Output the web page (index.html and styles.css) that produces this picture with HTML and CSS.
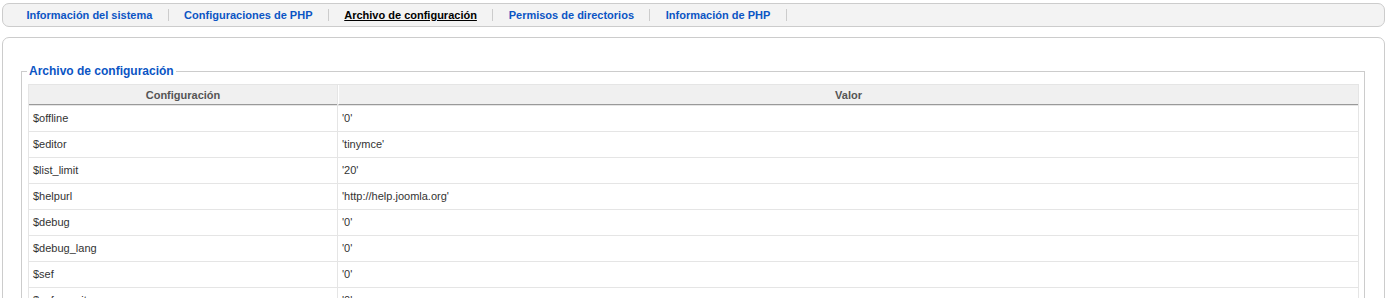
FILE: index.html
```html
<!DOCTYPE html>
<html lang="es">
<head>
<meta charset="UTF-8" />
<title>Información del sistema</title>
<link rel="stylesheet" href="styles.css">
</head>
<body>

<ul class="submenu">
  <li><a href="#">Información del sistema</a></li>
  <li><a href="#">Configuraciones de PHP</a></li>
  <li><a href="#" class="active">Archivo de configuración</a></li>
  <li><a href="#">Permisos de directorios</a></li>
  <li><a href="#">Información de PHP</a></li>
</ul>

<div class="panel">
  <fieldset class="adminform">
    <legend>Archivo de configuración</legend>
    <table class="adminlist">
      <thead>
        <tr>
          <th class="col-name">Configuración</th>
          <th>Valor</th>
        </tr>
      </thead>
      <tbody>
        <tr><td>$offline</td><td>'0'</td></tr>
        <tr><td>$editor</td><td>'tinymce'</td></tr>
        <tr><td>$list_limit</td><td>'20'</td></tr>
        <tr><td>$helpurl</td><td>'http://help.joomla.org'</td></tr>
        <tr><td>$debug</td><td>'0'</td></tr>
        <tr><td>$debug_lang</td><td>'0'</td></tr>
        <tr><td>$sef</td><td>'0'</td></tr>
        <tr><td>$sef_rewrite</td><td>'0'</td></tr>
        <tr><td>$sef_suffix</td><td>'0'</td></tr>
        <tr><td>$feed_limit</td><td>'10'</td></tr>
      </tbody>
    </table>
  </fieldset>
</div>

</body>
</html>
```

FILE: styles.css
```css
/* Base */
body {
  margin: 0;
  background: #fff;
  font-family: 'Liberation Sans', Arial, Helvetica, sans-serif;
  font-size: 11px;
  color: #333;
}

a {
  color: #0b55c4;
  text-decoration: none;
}

/* Tab bar at the top */
.submenu {
  list-style: none;
  margin: 3px 2px 0 2px;
  padding: 0 0 0 8px;
  height: 22px;
  border: 1px solid #ccc;
  border-radius: 7px;
  background: #f3f3f3;
  display: flex;
  align-items: center;
}

.submenu li {
  padding: 0 15.4px;
  border-right: 1px solid #ccc;
  line-height: 12px;
}

.submenu a {
  font-weight: bold;
  font-size: 11px;
}

.submenu a.active {
  color: #000;
  text-decoration: underline;
}

/* White panel holding the fieldset */
.panel {
  margin: 10px 2px 0 2px;
  border: 1px solid #ccc;
  border-radius: 7px;
  background: #fff;
  padding: 26px 19px 20px 18px;
}

fieldset.adminform {
  margin: 0;
  padding: 5px 5px 10px 6px;
  border: 1px solid #ccc;
}

fieldset.adminform legend {
  padding: 0 2px;
  margin-left: -1px;
  color: #0b55c4;
  font-size: 12px;
  font-weight: bold;
  line-height: 15px;
}

/* Configuration table */
table.adminlist {
  width: 100%;
  border-spacing: 1px;
  background: #e5e5e5;
  color: #333;
}

table.adminlist th {
  background: #f0f0f0;
  color: #555;
  font-weight: bold;
  text-align: center;
  padding: 3px 4px 2px;
  line-height: 14px;
  border-bottom: 1px solid #999;
  border-left: 1px solid #fff;
}

table.adminlist th.col-name {
  width: 300px;
  border-left: none;
}

table.adminlist td {
  background: #fff;
  padding: 5px 4px;
  line-height: 15px;
  text-align: left;
}
```
